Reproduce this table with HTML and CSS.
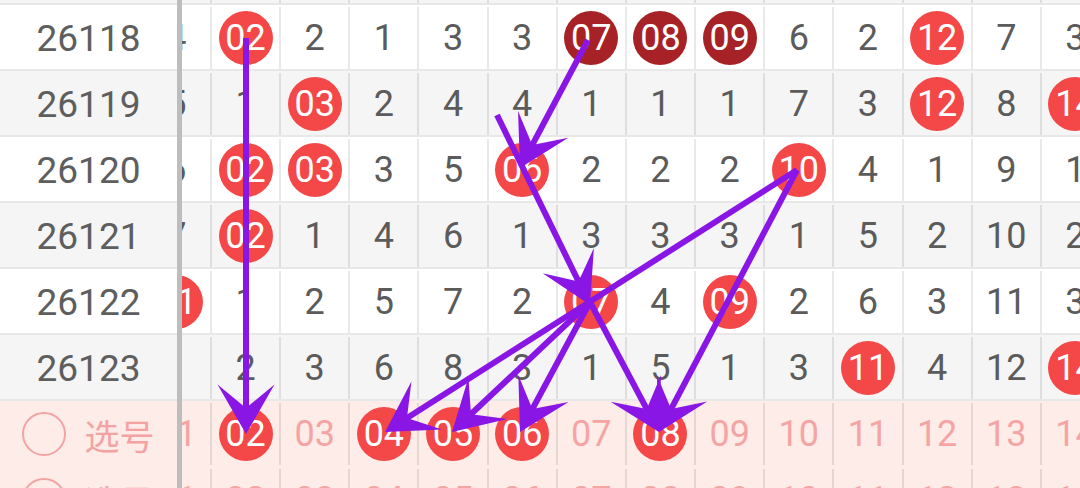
FILE: index.html
```html
<!DOCTYPE html>
<html lang="zh">
<head>
    <meta charset="UTF-8">
    <meta name="viewport" content="width=device-width, initial-scale=1.0">
    <title>走势图</title>
    <link rel="stylesheet" href="styles.css">
</head>
<body>

    <div class="board">
        <!-- kolom periode -->
        <div class="side">
            <div class="row gray period">26117</div>
            <div class="row period">26118</div>
            <div class="row gray period">26119</div>
            <div class="row period">26120</div>
            <div class="row gray period">26121</div>
            <div class="row period">26122</div>
            <div class="row gray period">26123</div>
            <div class="row pick period"><span class="radio"></span><span class="pick-text">选号</span></div>
            <div class="row pick period"><span class="radio"></span><span class="pick-text">选号</span></div>
        </div>

        <div class="divider"></div>

        <!-- tabel angka, sudah digeser (scroll) -->
        <div class="scroll">
            <div class="grid">
                <div class="row gray">
                    <div class="cell">3</div><div class="cell">1</div><div class="cell">1</div><div class="cell">2</div><div class="cell">2</div><div class="cell">6</div><div class="cell">6</div><div class="cell">7</div><div class="cell">8</div><div class="cell">5</div><div class="cell">1</div><div class="cell">6</div><div class="cell">2</div><div class="cell">2</div>
                </div>
                <div class="row">
                    <div class="cell">4</div><div class="cell"><span class="ball">02</span></div><div class="cell">2</div><div class="cell">1</div><div class="cell">3</div><div class="cell">3</div><div class="cell"><span class="ball dark">07</span></div><div class="cell"><span class="ball dark">08</span></div><div class="cell"><span class="ball dark">09</span></div><div class="cell">6</div><div class="cell">2</div><div class="cell"><span class="ball">12</span></div><div class="cell">7</div><div class="cell">3</div>
                </div>
                <div class="row gray">
                    <div class="cell">5</div><div class="cell">1</div><div class="cell"><span class="ball">03</span></div><div class="cell">2</div><div class="cell">4</div><div class="cell">4</div><div class="cell">1</div><div class="cell">1</div><div class="cell">1</div><div class="cell">7</div><div class="cell">3</div><div class="cell"><span class="ball">12</span></div><div class="cell">8</div><div class="cell"><span class="ball">14</span></div>
                </div>
                <div class="row">
                    <div class="cell">6</div><div class="cell"><span class="ball">02</span></div><div class="cell"><span class="ball">03</span></div><div class="cell">3</div><div class="cell">5</div><div class="cell"><span class="ball">06</span></div><div class="cell">2</div><div class="cell">2</div><div class="cell">2</div><div class="cell"><span class="ball">10</span></div><div class="cell">4</div><div class="cell">1</div><div class="cell">9</div><div class="cell">1</div>
                </div>
                <div class="row gray">
                    <div class="cell">7</div><div class="cell"><span class="ball">02</span></div><div class="cell">1</div><div class="cell">4</div><div class="cell">6</div><div class="cell">1</div><div class="cell">3</div><div class="cell">3</div><div class="cell">3</div><div class="cell">1</div><div class="cell">5</div><div class="cell">2</div><div class="cell">10</div><div class="cell">2</div>
                </div>
                <div class="row">
                    <div class="cell"><span class="ball">01</span></div><div class="cell">1</div><div class="cell">2</div><div class="cell">5</div><div class="cell">7</div><div class="cell">2</div><div class="cell"><span class="ball">07</span></div><div class="cell">4</div><div class="cell"><span class="ball">09</span></div><div class="cell">2</div><div class="cell">6</div><div class="cell">3</div><div class="cell">11</div><div class="cell">3</div>
                </div>
                <div class="row gray">
                    <div class="cell">1</div><div class="cell">2</div><div class="cell">3</div><div class="cell">6</div><div class="cell">8</div><div class="cell">3</div><div class="cell">1</div><div class="cell">5</div><div class="cell">1</div><div class="cell">3</div><div class="cell"><span class="ball">11</span></div><div class="cell">4</div><div class="cell">12</div><div class="cell"><span class="ball">14</span></div>
                </div>
                <div class="row pick">
                    <div class="cell">01</div><div class="cell"><span class="ball">02</span></div><div class="cell">03</div><div class="cell"><span class="ball">04</span></div><div class="cell"><span class="ball">05</span></div><div class="cell"><span class="ball">06</span></div><div class="cell">07</div><div class="cell"><span class="ball">08</span></div><div class="cell">09</div><div class="cell">10</div><div class="cell">11</div><div class="cell">12</div><div class="cell">13</div><div class="cell">14</div>
                </div>
                <div class="row pick">
                    <div class="cell">01</div><div class="cell">02</div><div class="cell">03</div><div class="cell">04</div><div class="cell">05</div><div class="cell">06</div><div class="cell">07</div><div class="cell">08</div><div class="cell">09</div><div class="cell">10</div><div class="cell">11</div><div class="cell">12</div><div class="cell">13</div><div class="cell">14</div>
                </div>
            </div>
        </div>
    </div>

    <!-- coretan panah di atas tabel -->
    <svg class="arrows" width="1080" height="488" viewBox="0 0 1080 488">
        <defs>
            <marker id="head" markerUnits="userSpaceOnUse" markerWidth="60" markerHeight="60" viewBox="0 0 60 60" refX="37" refY="30" orient="auto" overflow="visible">
                <path d="M57 30 L7.6 1.5 L31 30 L7.6 58.5 Z" fill="#8a16e6"/>
            </marker>
        </defs>
        <g stroke="#8a16e6" stroke-width="6" fill="none" marker-end="url(#head)">
            <line x1="246" y1="38" x2="246" y2="414"/>
            <line x1="588" y1="40" x2="529.4" y2="150.3"/>
            <line x1="497" y1="115" x2="581.2" y2="287"/>
            <line x1="797" y1="170" x2="401.9" y2="421.3"/>
            <line x1="590" y1="302" x2="466.6" y2="418.3"/>
            <line x1="590" y1="302" x2="529.5" y2="414.4"/>
            <line x1="590" y1="302" x2="649.6" y2="414.3"/>
            <line x1="797" y1="170" x2="668.3" y2="414.3"/>
        </g>
    </svg>

</body>
</html>
```

FILE: styles.css
```css
* {
    box-sizing: border-box;
}

body {
    margin: 0;
    width: 1080px;
    height: 488px;
    overflow: hidden;
    position: relative;
    background-color: #ffffff;
    font-family: Roboto, "Noto Sans CJK SC", sans-serif;
}

.board {
    display: flex;
    margin-top: -61px;
}

.side {
    width: 177px;
    flex: none;
}

.divider {
    width: 5px;
    flex: none;
    background-color: #bdbdbd;
}

.scroll {
    flex: 1;
    overflow: hidden;
}

/* digeser ke kiri, kolom 01 hampir tertutup */
.grid {
    margin-left: -41.2px;
    width: 968.4px;
}

.row {
    height: 66px;
    display: flex;
    padding-top: 2px;
    border-bottom: 2px solid #e8e8e8;
    background-color: #ffffff;
}

.row.gray {
    background-color: #f5f5f5;
}

.row.pick {
    background-color: #fdece7;
    border-bottom-color: #fdece7;
}

.period {
    justify-content: center;
    align-items: center;
    font-size: 37px;
    color: #5e5e5e;
}

.radio {
    width: 44px;
    height: 44px;
    border: 2px solid #f4a3a3;
    border-radius: 50%;
    margin-right: 18px;
}

.pick-text {
    font-family: "Noto Sans CJK SC", sans-serif;
    font-size: 35px;
    color: #f4a3a3;
}

.cell {
    flex: 0 0 69.17px;
    border-left: 2px solid rgba(0, 0, 0, 0.09);
    display: flex;
    align-items: center;
    justify-content: center;
    font-size: 36px;
    color: #5b5b5b;
}

.pick .cell {
    color: #f5a4a4;
}

.ball {
    width: 54px;
    height: 54px;
    border-radius: 50%;
    background-color: #f44848;
    color: #ffffff;
    display: flex;
    align-items: center;
    justify-content: center;
    line-height: 1;
}

.ball.dark {
    background-color: #a72226;
}

.arrows {
    position: absolute;
    top: 0;
    left: 0;
    pointer-events: none;
}
```
